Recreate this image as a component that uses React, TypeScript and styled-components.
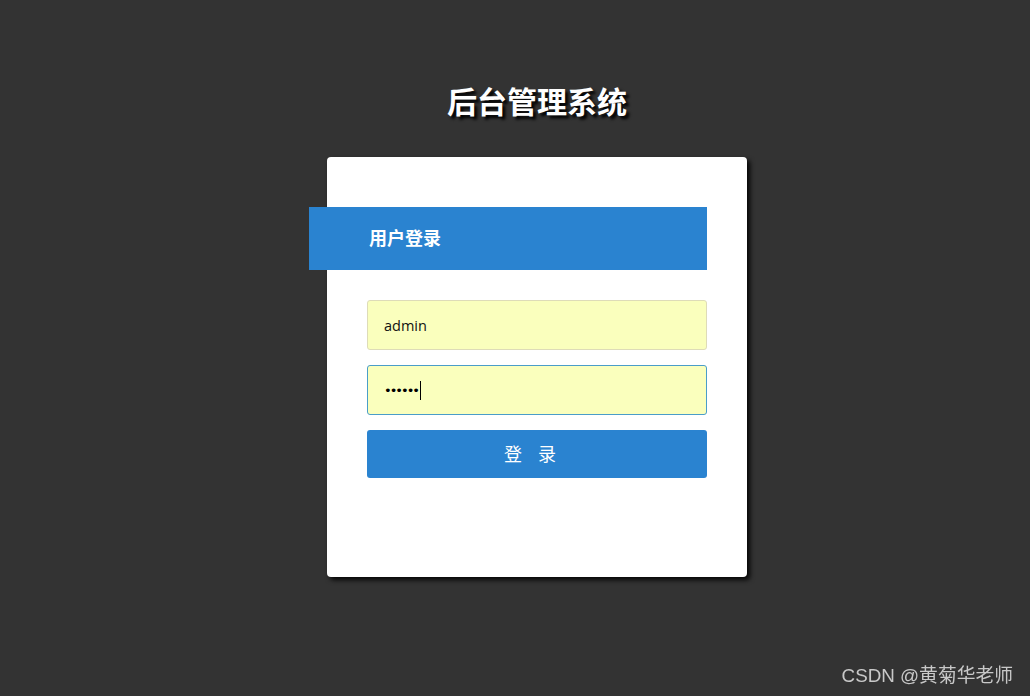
import React from "react";
import styled, { createGlobalStyle } from "styled-components";

const GlobalStyle = createGlobalStyle`
  html, body {
    margin: 0;
    padding: 0;
    background: #333333;
    height: 100%;
  }
  body {
    font-family: "Noto Sans", "Noto Sans CJK SC", sans-serif;
  }
`;

const Page = styled.div`
  min-height: 696px;
  display: flex;
  flex-direction: column;
  align-items: center;
  padding: 80px 0 0 44px;
  box-sizing: border-box;
`;

const Title = styled.h1`
  margin: 0 0 37px;
  font-family: "Noto Sans CJK SC", sans-serif;
  font-size: 30px;
  line-height: 40px;
  font-weight: 700;
  color: #ffffff;
  text-shadow: 3px 3px 3px #000000;
`;

const Card = styled.div`
  width: 420px;
  height: 420px;
  box-sizing: border-box;
  background: #ffffff;
  border-radius: 4px;
  box-shadow: 3px 3px 5px rgba(0, 0, 0, 0.9);
  padding: 50px 40px 0 40px;
  display: flex;
  flex-direction: column;
`;

const Band = styled.div`
  margin-left: -58px;
  width: 398px;
  height: 63px;
  background: #2a83d0;
  display: flex;
  align-items: center;
  padding: 0 0 3px 60px;
  box-sizing: border-box;
  font-family: "Noto Sans CJK SC", sans-serif;
  font-size: 18px;
  font-weight: 700;
  color: #ffffff;
  margin-bottom: 30px;
`;

const Form = styled.div`
  display: flex;
  flex-direction: column;
  gap: 15px;
`;

const Input = styled.div<{ $focused?: boolean }>`
  height: 50px;
  box-sizing: border-box;
  border: 1px solid ${(p) => (p.$focused ? "#4a9dc9" : "#dedcb8")};
  border-radius: 3px;
  background: #faffbd;
  display: flex;
  align-items: center;
  padding-left: 16px;
  font-family: "Open Sans", "Noto Sans", sans-serif;
  font-size: 14.5px;
  color: #111111;
`;

const Dots = styled.span`
  font-size: 13px;
  letter-spacing: -2px;
  color: #000;
  font-family: "DejaVu Sans", sans-serif;
`;

const Caret = styled.span`
  display: inline-block;
  width: 1px;
  height: 19px;
  background: #000;
  margin-left: 2px;
`;

const Button = styled.button`
  height: 48px;
  border: none;
  border-radius: 3px;
  background: #2a83d0;
  color: #ffffff;
  font-family: "Noto Sans CJK SC", sans-serif;
  font-size: 18px;
  letter-spacing: 6px;
  padding: 0 8px 2px 0;
  cursor: pointer;
`;

const Watermark = styled.div`
  position: fixed;
  right: 17px;
  bottom: 9px;
  font-family: "Liberation Sans", "Noto Sans CJK SC", sans-serif;
  font-size: 18.8px;
  color: #c8c8c8;
`;

export default function App() {
  return (
    <>
      <GlobalStyle />
      <Page>
        <Title>后台管理系统</Title>
        <Card>
          <Band>用户登录</Band>
          <Form>
            <Input>admin</Input>
            <Input $focused>
              <Dots>••••••</Dots>
              <Caret />
            </Input>
            <Button>登 录</Button>
          </Form>
        </Card>
      </Page>
      <Watermark>CSDN @黄菊华老师</Watermark>
    </>
  );
}
